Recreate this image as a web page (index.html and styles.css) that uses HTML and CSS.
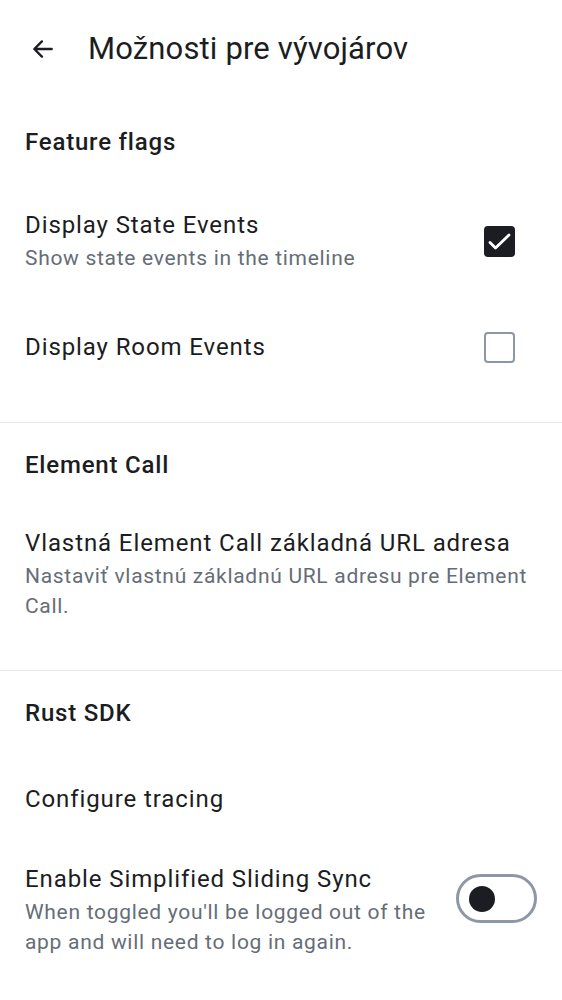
FILE: index.html
```html
<!DOCTYPE html>
<html lang="sk">
<head>
<meta charset="utf-8">
<link rel="stylesheet" href="styles.css">
</head>
<body>
<header class="topbar">
  <svg class="back" viewBox="0 0 24 24" width="26" height="26" aria-hidden="true">
    <path d="M20 12H5M11 5l-7 7 7 7" fill="none" stroke="#1b1d22" stroke-width="2.2" stroke-linecap="round" stroke-linejoin="round"/>
  </svg>
  <h1 class="title">Možnosti pre vývojárov</h1>
</header>

<section class="section section--flags">
  <h2 class="section-title">Feature flags</h2>
  <div class="item item--check">
    <div class="item-text">
      <div class="item-main">Display State Events</div>
      <div class="item-sub">Show state events in the timeline</div>
    </div>
    <span class="checkbox checkbox--on">
      <svg viewBox="0 0 31 31" width="31" height="31" aria-hidden="true"><path d="M6 16.5l5.5 5.5L25 9" fill="none" stroke="#fff" stroke-width="2.8" stroke-linecap="round" stroke-linejoin="round"/></svg>
    </span>
  </div>
  <div class="item item--check">
    <div class="item-text">
      <div class="item-main">Display Room Events</div>
    </div>
    <span class="checkbox"></span>
  </div>
</section>

<section class="section">
  <h2 class="section-title">Element Call</h2>
  <div class="item">
    <div class="item-text">
      <div class="item-main">Vlastná Element Call základná URL adresa</div>
      <div class="item-sub">Nastaviť vlastnú základnú URL adresu pre Element Call.</div>
    </div>
  </div>
</section>

<section class="section section--last">
  <h2 class="section-title">Rust SDK</h2>
  <div class="item item--single">
    <div class="item-text">
      <div class="item-main">Configure tracing</div>
    </div>
  </div>
  <div class="item item--switch">
    <div class="item-text">
      <div class="item-main">Enable Simplified Sliding Sync</div>
      <div class="item-sub">When toggled you'll be logged out of the app and will need to log in again.</div>
    </div>
    <span class="switch"><span class="knob"></span></span>
  </div>
</section>
</body>
</html>
```

FILE: styles.css
```css
* { box-sizing: border-box; }
html, body { margin: 0; padding: 0; background: #fff; }
body {
  font-family: Roboto, "Noto Sans", sans-serif;
  color: #1b1d22;
  width: 562px;
}
.topbar {
  height: 98px;
  display: flex;
  align-items: center;
  padding-left: 30px;
}
.back { display: block; flex: none; }
.title {
  margin: 0 0 0 32px;
  font-size: 31px;
  font-weight: 400;
  line-height: 36px;
  letter-spacing: 0.15px;
}
.section {
  border-bottom: 1px solid #e6e9ee;
  padding-bottom: 25px;
}
.section--flags { padding-bottom: 30px; }
.section--last { border-bottom: none; }
.section-title {
  margin: 0;
  padding: 26px 25px 22px;
  font-size: 24px;
  font-weight: 500;
  line-height: 32px;
  letter-spacing: 0.8px;
}
.section--flags .section-title { padding-top: 28px; }
.item {
  display: flex;
  align-items: center;
  padding: 24px 25px;
  gap: 16px;
}
.item--check { padding-top: 29px; padding-bottom: 29px; }
.item--single { padding-top: 32px; padding-bottom: 24px; }
.item--switch { align-items: flex-start; }
.item-text { flex: 1; min-width: 0; }
.item-main {
  font-size: 24px;
  line-height: 32px;
  letter-spacing: 0.9px;
}
.item-sub {
  margin-top: 2px;
  font-size: 21px;
  line-height: 30px;
  color: #656d77;
  letter-spacing: 0.7px;
}
.checkbox {
  flex: none;
  width: 31px;
  height: 31px;
  margin-right: 22px;
  border: 2.5px solid #8d97a5;
  border-radius: 4px;
  display: flex;
  align-items: center;
  justify-content: center;
}
.checkbox--on {
  background: #1b1d22;
  border: none;
}
.checkbox svg { display: block; flex: none; }
.switch {
  flex: none;
  margin-top: 11px;
  width: 81px;
  height: 49px;
  border: 3px solid #8d97a5;
  border-radius: 25px;
  display: flex;
  align-items: center;
  padding-left: 10px;
}
.knob {
  width: 26px;
  height: 26px;
  border-radius: 50%;
  background: #1b1d22;
}
```
